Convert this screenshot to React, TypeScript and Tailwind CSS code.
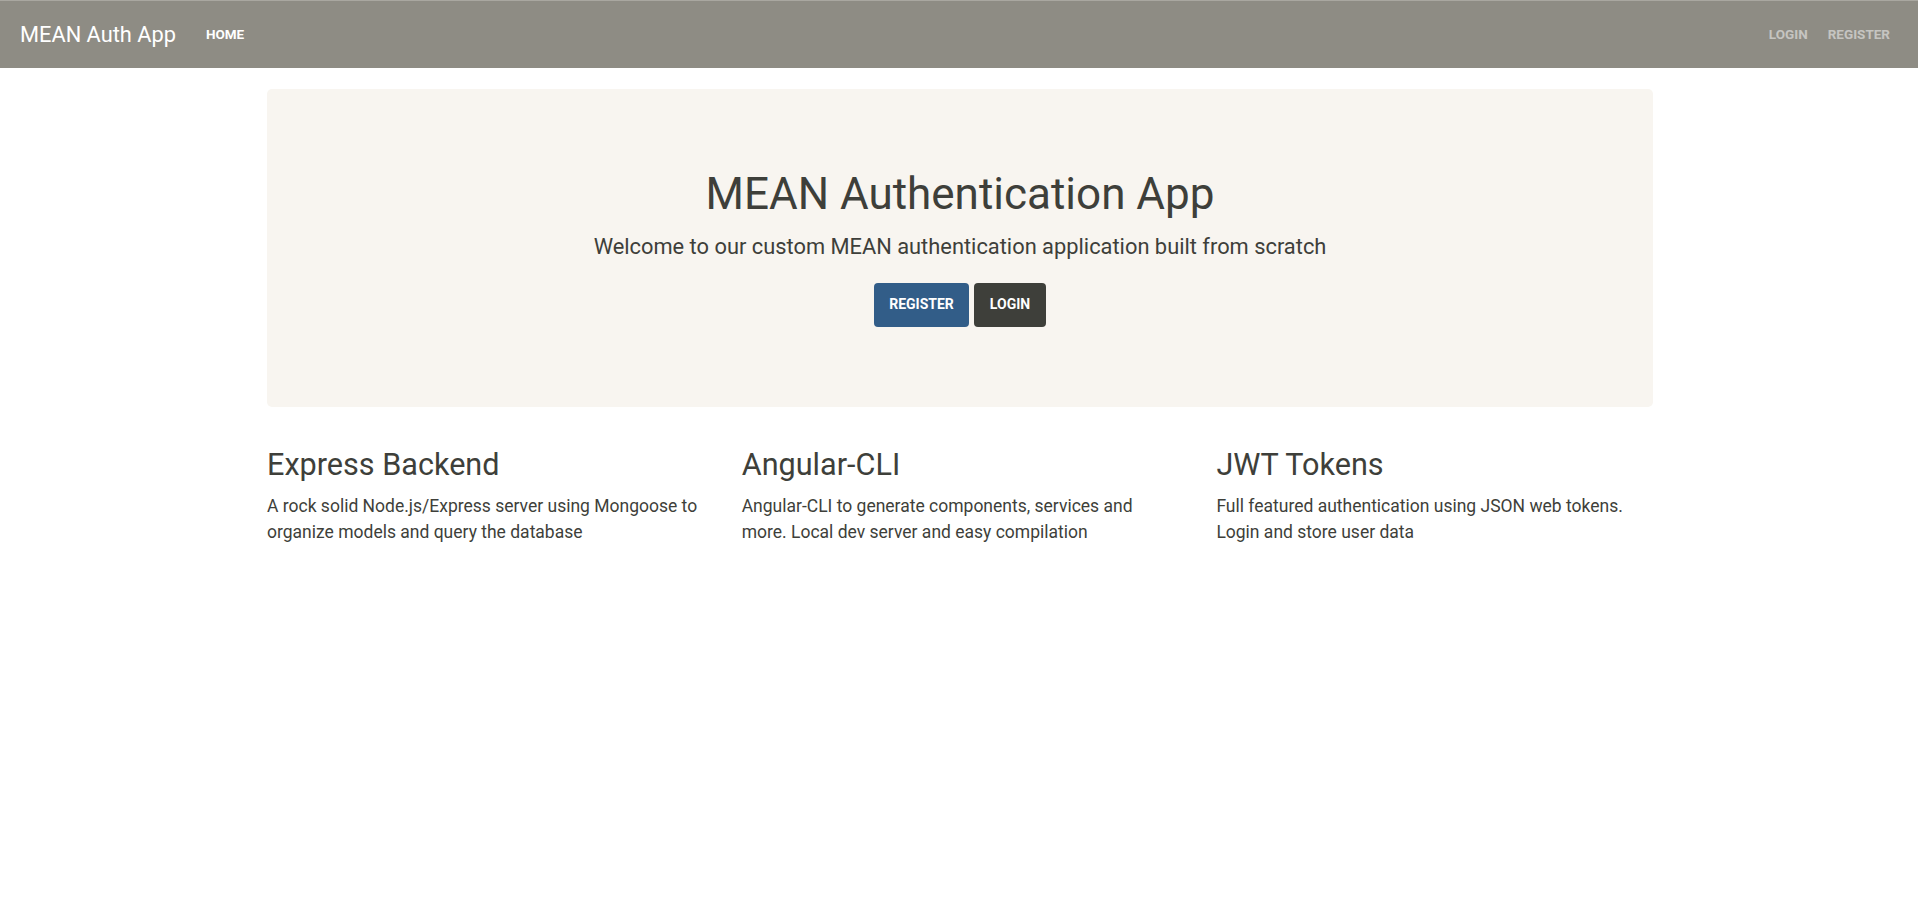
import React from 'react';

const features = [
  {
    title: 'Express Backend',
    text: 'A rock solid Node.js/Express server using Mongoose to organize models and query the database',
  },
  {
    title: 'Angular-CLI',
    text: 'Angular-CLI to generate components, services and more. Local dev server and easy compilation',
  },
  {
    title: 'JWT Tokens',
    text: 'Full featured authentication using JSON web tokens. Login and store user data',
  },
];

export default function App() {
  return (
    <div className="min-h-screen bg-white text-[#3e3f3a] font-['Roboto',sans-serif]">
      {/* Navbar */}
      <nav className="h-[68px] bg-[#8e8c84] border-t border-[#a9a7a0] flex items-center pl-[20px] pr-[18px]">
        <a className="text-[21.8px] text-white leading-none mr-[20px]" href="#">MEAN Auth App</a>
        <ul className="flex items-center mb-[2px]">
          <li>
            <a className="px-[10px] text-[13.5px] font-bold uppercase text-white" href="#">Home</a>
          </li>
        </ul>
        <ul className="flex items-center ml-auto mb-[2px]">
          <li>
            <a className="px-[10px] text-[13.5px] font-bold uppercase text-white/50" href="#">Login</a>
          </li>
          <li>
            <a className="px-[10px] text-[13.5px] font-bold uppercase text-white/50" href="#">Register</a>
          </li>
        </ul>
      </nav>

      <div className="w-[1394px] ml-[267px]">
        {/* Jumbotron */}
        <div className="mt-[21px] w-[1386px] bg-[#f8f5f0] rounded-[5px] pt-[79px] pb-[80px] flex flex-col items-center text-center">
          <h1 className="text-[44px] leading-[1.2] font-normal">MEAN Authentication App</h1>
          <p className="mt-[9px] text-[21.85px] leading-[33px]">
            Welcome to our custom MEAN authentication application built from scratch
          </p>
          <div className="mt-[20px] flex gap-[5px]">
            <a className="w-[95px] h-[44px] rounded-[4px] bg-[#325d88] text-white text-[14px] font-bold uppercase flex items-center justify-center" href="#">
              Register
            </a>
            <a className="w-[72px] h-[44px] rounded-[4px] bg-[#3e3f3a] text-white text-[14px] font-bold uppercase flex items-center justify-center" href="#">
              Login
            </a>
          </div>
        </div>

        {/* Features */}
        <div className="mt-[40px] grid grid-cols-[440px_440px_440px] gap-x-[34.7px]">
          {features.map((f) => (
            <div key={f.title}>
              <h2 className="text-[30.6px] leading-[1.2] font-normal">{f.title}</h2>
              <p className="mt-[9px] text-[17.5px] leading-[26.4px]">{f.text}</p>
            </div>
          ))}
        </div>
      </div>
    </div>
  );
}
